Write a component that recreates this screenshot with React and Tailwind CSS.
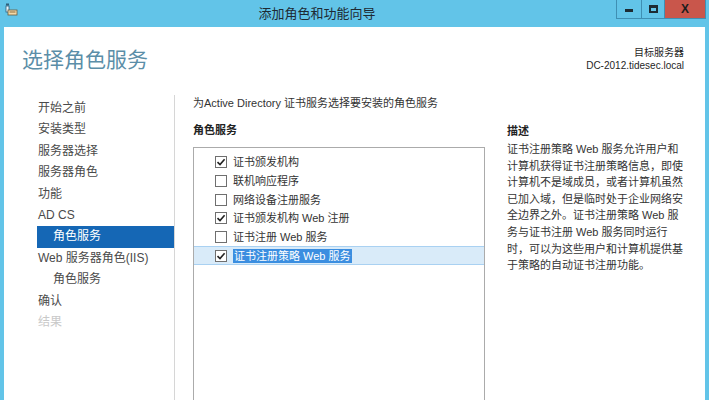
import React from 'react';

const font = "font-['Liberation_Sans','Noto_Sans_CJK_SC',sans-serif]";

const navItems = [
  { label: '开始之前' },
  { label: '安装类型' },
  { label: '服务器选择' },
  { label: '服务器角色' },
  { label: '功能' },
  { label: 'AD CS' },
  { label: '角色服务', sub: true, active: true },
  { label: 'Web 服务器角色(IIS)' },
  { label: '角色服务', sub: true },
  { label: '确认' },
  { label: '结果', disabled: true },
];

const services = [
  { label: '证书颁发机构', checked: true },
  { label: '联机响应程序', checked: false },
  { label: '网络设备注册服务', checked: false },
  { label: '证书颁发机构 Web 注册', checked: true },
  { label: '证书注册 Web 服务', checked: false },
  { label: '证书注册策略 Web 服务', checked: true, selected: true },
];

const descLines = [
  '证书注册策略 Web 服务允许用户和',
  '计算机获得证书注册策略信息，即使',
  '计算机不是域成员，或者计算机虽然',
  '已加入域，但是临时处于企业网络安',
  '全边界之外。证书注册策略 Web 服',
  '务与证书注册 Web 服务同时运行',
  '时，可以为这些用户和计算机提供基',
  '于策略的自动证书注册功能。',
];

function Checkbox({ checked }) {
  return (
    <div className="w-[12px] h-[12px] border border-[#6f6f6f] bg-white flex items-center justify-center shrink-0">
      {checked && (
        <svg width="10" height="10" viewBox="0 0 10 10">
          <path d="M1.5 5.2 L4 7.6 L8.6 2.2" fill="none" stroke="#222" strokeWidth="1.6" />
        </svg>
      )}
    </div>
  );
}

function TitleBar() {
  return (
    <div className="h-[27px] flex items-start relative shrink-0">
      <div className="pl-[5px] pt-[3px]">
        <svg width="13" height="13" viewBox="0 0 13 13">
          <rect x="1" y="0.5" width="3" height="2" fill="#2f5f7a" />
          <rect x="1" y="3" width="3" height="6" fill="#e8f4fa" stroke="#2f5f7a" strokeWidth="0.8" />
          <rect x="3" y="7" width="9" height="5" fill="#f4d9a8" stroke="#6a5a3a" strokeWidth="0.8" />
          <rect x="4.5" y="8.5" width="6" height="1" fill="#8a6a3a" />
        </svg>
      </div>
      <div className="flex-1 text-center text-[13px] leading-[27px] text-[#1e2a33]">添加角色和功能向导</div>
      <div className="flex h-[19px] mr-[3px] border border-t-0 border-[#3f8fb3]">
        <div className="w-[25px] flex items-center justify-center border-r border-[#3f8fb3]">
          <div className="w-[8px] h-[3px] bg-[#1d2b33] mt-[3px]" />
        </div>
        <div className="w-[23px] flex items-center justify-center border-r border-[#3f8fb3]">
          <div className="w-[9px] h-[8px] border-2 border-t-[3px] border-[#1d2b33]" />
        </div>
        <div className="w-[40px] bg-[#c9564b] flex items-center justify-center text-[12px] font-bold text-[#1d1d1d]">
          X
        </div>
      </div>
    </div>
  );
}

export default function App() {
  return (
    <div className={`w-[709px] h-[400px] bg-[#62c4e8] flex flex-col overflow-hidden ${font}`}>
      <TitleBar />
      <div className="flex-1 mx-[4px] bg-white flex flex-col min-h-0">
        <div className="h-[68px] flex justify-between items-start shrink-0">
          <h1 className="text-[21px] leading-[28px] text-[#5b8ea8] pl-[18px] pt-[19px] font-normal">选择角色服务</h1>
          <div className="pr-[21px] pt-[19px] text-right text-[10px] leading-[13px] text-[#1f1f1f]">
            <div>目标服务器</div>
            <div>DC-2012.tidesec.local</div>
          </div>
        </div>
        <div className="flex-1 flex min-h-0">
          <div className="w-[171px] border-r border-[#d6d6d6] pl-[33px] pt-[3px] shrink-0">
            {navItems.map((item, i) => (
              <div
                key={i}
                className={`h-[21.4px] leading-[21.4px] text-[12px] whitespace-nowrap ${item.sub ? 'pl-[16px]' : 'pl-[1px]'} ${
                  item.active ? 'bg-[#1567b5] text-white' : item.disabled ? 'text-[#c9c9c9]' : 'text-[#4a4a4a]'
                }`}
              >
                {item.label}
              </div>
            ))}
          </div>
          <div className="flex-1 flex pl-[18px] pt-[1px] min-w-0">
            <div className="w-[292px] flex flex-col shrink-0">
              <div className="text-[11px] leading-[14px] text-[#333] h-[14px]">为Active Directory 证书服务选择要安装的角色服务</div>
              <div className="text-[11px] font-bold leading-[14px] text-[#222] mt-[13px]">角色服务</div>
              <div className="mt-[10px] flex-1 border border-[#ababab] border-b-0 pt-[5px]">
                {services.map((s, i) => (
                  <div
                    key={i}
                    className={`h-[18.7px] flex items-center pl-[21px] gap-[6px] ${
                      s.selected ? 'bg-[#d9ebf9] border-y border-[#a9d1f2]' : ''
                    }`}
                  >
                    <Checkbox checked={s.checked} />
                    <span
                      className={`text-[11px] leading-[14px] whitespace-nowrap ${
                        s.selected ? 'bg-[#3b8ee0] text-white px-[1px]' : 'text-[#333]'
                      }`}
                    >
                      {s.label}
                    </span>
                  </div>
                ))}
              </div>
            </div>
            <div className="flex-1 pl-[22px] pt-[28px]">
              <div className="text-[11px] font-bold leading-[14px] text-[#222]">描述</div>
              <div className="mt-[3px] text-[11px] leading-[16.6px] text-[#333]">
                {descLines.map((l, i) => (
                  <div key={i} className="whitespace-nowrap">{l}</div>
                ))}
              </div>
            </div>
          </div>
        </div>
      </div>
    </div>
  );
}
